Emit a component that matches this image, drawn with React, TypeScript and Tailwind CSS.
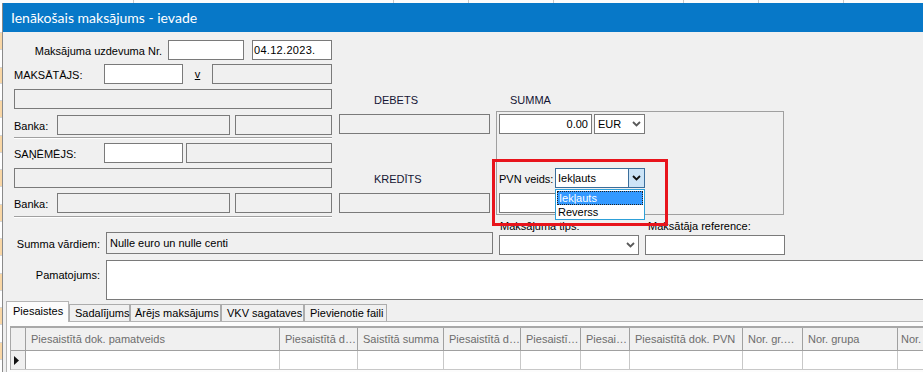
import React from "react";

const Chev = ({ color = "#5a5a5a" }: { color?: string }) => (
  <svg width="9" height="6" viewBox="0 0 9 6">
    <path d="M1 1L4.5 4.5L8 1" fill="none" stroke={color} strokeWidth="1.8" />
  </svg>
);

const W = "bg-white border border-[#7a7a7a]";
const G = "bg-[#f0f0f0] border border-[#7a7a7a]";

const stripCells: [number, boolean][] = [
  [30, false], [17, true], [18, false], [16, true], [17, false], [17, true], [18, false], [17, true],
  [17, false], [17, true], [18, false], [17, true], [17, false], [17, true], [18, false], [17, true],
  [17, false], [17, true], [18, false], [17, true], [17, false],
];

const cols: [string, number][] = [
  ["Piesaistītā dok. pamatveids", 254],
  ["Piesaistītā d…", 78],
  ["Saistītā summa", 86],
  ["Piesaistītā d…", 77],
  ["Piesaistī…", 60],
  ["Piesai…", 49],
  ["Piesaistītā dok. PVN", 113],
  ["Nor. gr.…", 60],
  ["Nor. grupa", 95],
  ["Nor.", 60],
];

export default function App() {
  return (
    <div className="w-[923px] h-[372px] overflow-hidden flex flex-col bg-white text-[11px] text-black [font-family:'Liberation_Sans',Arial,sans-serif]">
      {/* background top strip */}
      <div className="h-[3px] shrink-0 flex bg-[#fbfbfb]">
        <div className="w-[133px]" />
        <div className="w-px bg-[#c8c8c8]" />
        <div className="w-[259px]" />
        <div className="w-px bg-[#c8c8c8]" />
        <div className="w-[74px]" />
        <div className="w-px bg-[#c8c8c8]" />
        <div className="w-[84px]" />
        <div className="w-px bg-[#c8c8c8]" />
        <div className="w-[129px]" />
        <div className="w-px bg-[#c8c8c8]" />
        <div className="w-[74px]" />
        <div className="w-px bg-[#c8c8c8]" />
        <div className="w-[84px]" />
        <div className="w-px bg-[#c8c8c8]" />
      </div>
      <div className="flex flex-1 min-h-0">
        {/* background left strip */}
        <div className="w-[3px] shrink-0 flex flex-col border-r border-[#8a8a8a]">
          {stripCells.map(([h, o], i) => (
            <div
              key={i}
              style={{ height: h }}
              className={`shrink-0 border-b border-[#d6d6d6] ${o ? "bg-[#f9d7a6]" : "bg-white"}`}
            />
          ))}
        </div>
        {/* window */}
        <div className="flex-1 min-w-0 flex flex-col bg-[#f0f0f0]">
          <div className="h-[29px] shrink-0 bg-[#0778c8] text-white text-[14px] leading-[29px] pl-[8px] [font-family:Lato,'Noto_Sans',sans-serif]">
            Ienākošais maksājums - ievade
          </div>
          <div className="relative flex-1 min-h-0 flex flex-col">
            {/* Section A */}
            <div className="flex items-start mt-[8px]">
              {/* left column */}
              <div className="ml-[11px] w-[318px] flex flex-col shrink-0">
                <div className="flex h-[20px]">
                  <div className="w-[154px] pr-[6px] text-right leading-[20px] pt-[1px]">Maksājuma uzdevuma Nr.</div>
                  <div className={`w-[76px] ${W}`} />
                  <div className={`ml-[8px] w-[80px] ${W} pl-[1px] leading-[18px] tracking-[0.3px]`}>04.12.2023.</div>
                </div>
                <div className="flex h-[20px] mt-[4px]">
                  <div className="w-[90px] leading-[20px] pt-[1px]">MAKSĀTĀJS:</div>
                  <div className={`w-[79px] ${W}`} />
                  <div className="w-[29px] text-center leading-[20px] underline">v</div>
                  <div className={`w-[120px] ${G}`} />
                </div>
                <div className={`h-[20px] mt-[5px] ${G}`} />
                <div className="flex h-[20px] mt-[6px]">
                  <div className="w-[43px] leading-[20px] pt-[1px]">Banka:</div>
                  <div className={`w-[173px] ${G}`} />
                  <div className={`ml-[5px] w-[97px] ${G}`} />
                </div>
                <div className="mt-[2px] h-[2px] border-t border-[#a0a0a0] border-b border-b-white" />
                <div className="flex h-[20px] mt-[4px]">
                  <div className="w-[90px] leading-[20px] pt-[1px]">SAŅĒMĒJS:</div>
                  <div className={`w-[79px] ${W}`} />
                  <div className={`ml-[3px] w-[146px] ${G}`} />
                </div>
                <div className={`h-[20px] mt-[5px] ${G}`} />
                <div className="flex h-[20px] mt-[5px]">
                  <div className="w-[43px] leading-[20px] pt-[1px]">Banka:</div>
                  <div className={`w-[173px] ${G}`} />
                  <div className={`ml-[5px] w-[97px] ${G}`} />
                </div>
                <div className="mt-[3px] h-[2px] border-t border-[#a0a0a0] border-b border-b-white" />
              </div>

              {/* middle column */}
              <div className="ml-[7px] w-[151px] flex flex-col shrink-0">
                <div className="mt-[50px] h-[20px] leading-[20px] pl-[35px] text-[#141433]">DEBETS</div>
                <div className={`mt-[4px] h-[20px] ${G}`} />
                <div className="mt-[35px] h-[20px] leading-[20px] pl-[35px] text-[#141433]">KREDĪTS</div>
                <div className={`mt-[4px] h-[20px] ${G}`} />
              </div>

              {/* right column */}
              <div className="ml-[6px] w-[288px] flex flex-col shrink-0">
                <div className="mt-[50px] h-[20px] leading-[20px] pl-[14px] text-[#141433]">SUMMA</div>
                <div className="mt-[1px] h-[104px] border border-[#a0a0a0] pl-[2px] pt-[2px] flex flex-col">
                  <div className="flex h-[20px]">
                    <div className={`w-[93px] ${W} text-right pr-[3px] leading-[18px]`}>0.00</div>
                    <div className={`ml-[2px] w-[51px] ${W} flex items-center justify-between pl-[3px] pr-[3px]`}>
                      <span>EUR</span>
                      <Chev />
                    </div>
                  </div>
                  <div className="flex h-[20px] mt-[34px]">
                    <div className="w-[56px] leading-[20px] pt-[1px]">PVN veids:</div>
                    <div className="relative w-[90px] h-[20px] bg-white border border-[#3b6e9b] flex">
                      <div className="flex-1 pl-[2px] leading-[18px]">Iekļauts</div>
                      <div className="w-[16px] bg-[#cce4f7] border-l border-[#3b6e9b] flex items-center justify-center">
                        <Chev color="#111" />
                      </div>
                      {/* open dropdown list */}
                      <div className="absolute left-[-1px] top-[20px] w-[90px] h-[31px] bg-white border border-[#2ea0d8] z-10 flex flex-col">
                        <div className="h-[14px] mt-[1px] mx-[1px] bg-[#3399ff] border border-dotted border-[#222] text-white leading-[12px] pl-[1px]">Iekļauts</div>
                        <div className="h-[14px] leading-[14px] pl-[2px]">Reverss</div>
                      </div>
                    </div>
                  </div>
                  <div className={`mt-[5px] w-[93px] h-[20px] ${W}`} />
                </div>
              </div>
            </div>

            {/* Section B */}
            <div className="flex items-start">
              <div className="mt-[14px] w-[103px] h-[22px] text-right pr-[6px] leading-[22px] pt-[1px] shrink-0">Summa vārdiem:</div>
              <div className={`mt-[14px] w-[387px] h-[22px] ${G} pl-[3px] leading-[20px] shrink-0`}>Nulle euro un nulle centi</div>
              <div className="ml-[6px] w-[140px] flex flex-col shrink-0">
                <div className="h-[14px] leading-[14px] pl-[1px] pt-[1px]">Maksājuma tips:</div>
                <div className={`mt-[3px] h-[20px] ${W} flex items-center justify-end pr-[3px]`}>
                  <Chev />
                </div>
              </div>
              <div className="ml-[6px] w-[140px] flex flex-col shrink-0">
                <div className="h-[14px] leading-[14px] pl-[3px] pt-[1px]">Maksātāja reference:</div>
                <div className={`mt-[3px] h-[20px] ${W}`} />
              </div>
            </div>

            {/* Pamatojums */}
            <div className="flex mt-[5px] h-[40px]">
              <div className="w-[103px] text-right pr-[6px] pt-[8px] leading-[14px] shrink-0">Pamatojums:</div>
              <div className={`flex-1 ${W} border-r-0`} />
            </div>

            {/* Tabs */}
            <div className="flex items-end h-[21px] ml-[3px] mt-[1px]">
              <div className="w-[63px] h-[21px] bg-[#fcfcfc] border border-b-0 border-[#b4b4b4] pl-[6px] leading-[19px] relative z-10">Piesaistes</div>
              <div className="w-[61px] h-[18px] bg-[#f0f0f0] border border-b-0 border-[#acacac] pl-[5px] leading-[17px]">Sadalījums</div>
              <div className="w-[91px] h-[18px] bg-[#f0f0f0] border border-b-0 border-[#acacac] pl-[4px] leading-[17px] whitespace-nowrap">Ārējs maksājums</div>
              <div className="w-[83px] h-[18px] bg-[#f0f0f0] border border-b-0 border-[#acacac] pl-[5px] leading-[17px]">VKV sagataves</div>
              <div className="w-[83px] h-[18px] bg-[#f0f0f0] border border-b-0 border-[#acacac] pl-[5px] leading-[17px]">Pievienotie faili</div>
            </div>
            <div className="ml-[3px] flex-1 min-h-0 bg-[#fcfcfc] border-t border-l border-[#b4b4b4] -mt-px pl-[3px] pt-[4px]">
              <div className="border-t-2 border-l border-[#a8a8a8] bg-white">
                <div className="flex h-[23px] bg-[#f0f0f0] border-b border-[#a0a0a0]">
                  <div className="w-[15px] shrink-0 border-r border-[#a0a0a0]" />
                  {cols.map(([t, w], i) => (
                    <div
                      key={i}
                      style={{ width: w }}
                      className={`shrink-0 border-r border-[#a0a0a0] ${i === cols.length - 1 ? "pl-[3px]" : "pl-[5px]"} leading-[22px] text-[#6d6d6d] whitespace-nowrap overflow-hidden`}
                    >
                      {t}
                    </div>
                  ))}
                </div>
                <div className="flex h-[19px] bg-white border-b border-[#c8c8c8]">
                  <div className="w-[15px] shrink-0 border-r border-[#a0a0a0] bg-[#f0f0f0] flex items-center pl-[3px]">
                    <svg width="5" height="9" viewBox="0 0 5 9">
                      <path d="M0 0L5 4.5L0 9Z" fill="#111" />
                    </svg>
                  </div>
                  {cols.map(([, w], i) => (
                    <div key={i} style={{ width: w }} className="shrink-0 border-r border-[#c8c8c8]" />
                  ))}
                </div>
              </div>
            </div>

            {/* red highlight rectangle */}
            <div className="absolute left-[489px] top-[127px] w-[176px] h-[67px] border-[3px] border-[#e8141c] z-20 pointer-events-none" />
          </div>
        </div>
      </div>
    </div>
  );
}
